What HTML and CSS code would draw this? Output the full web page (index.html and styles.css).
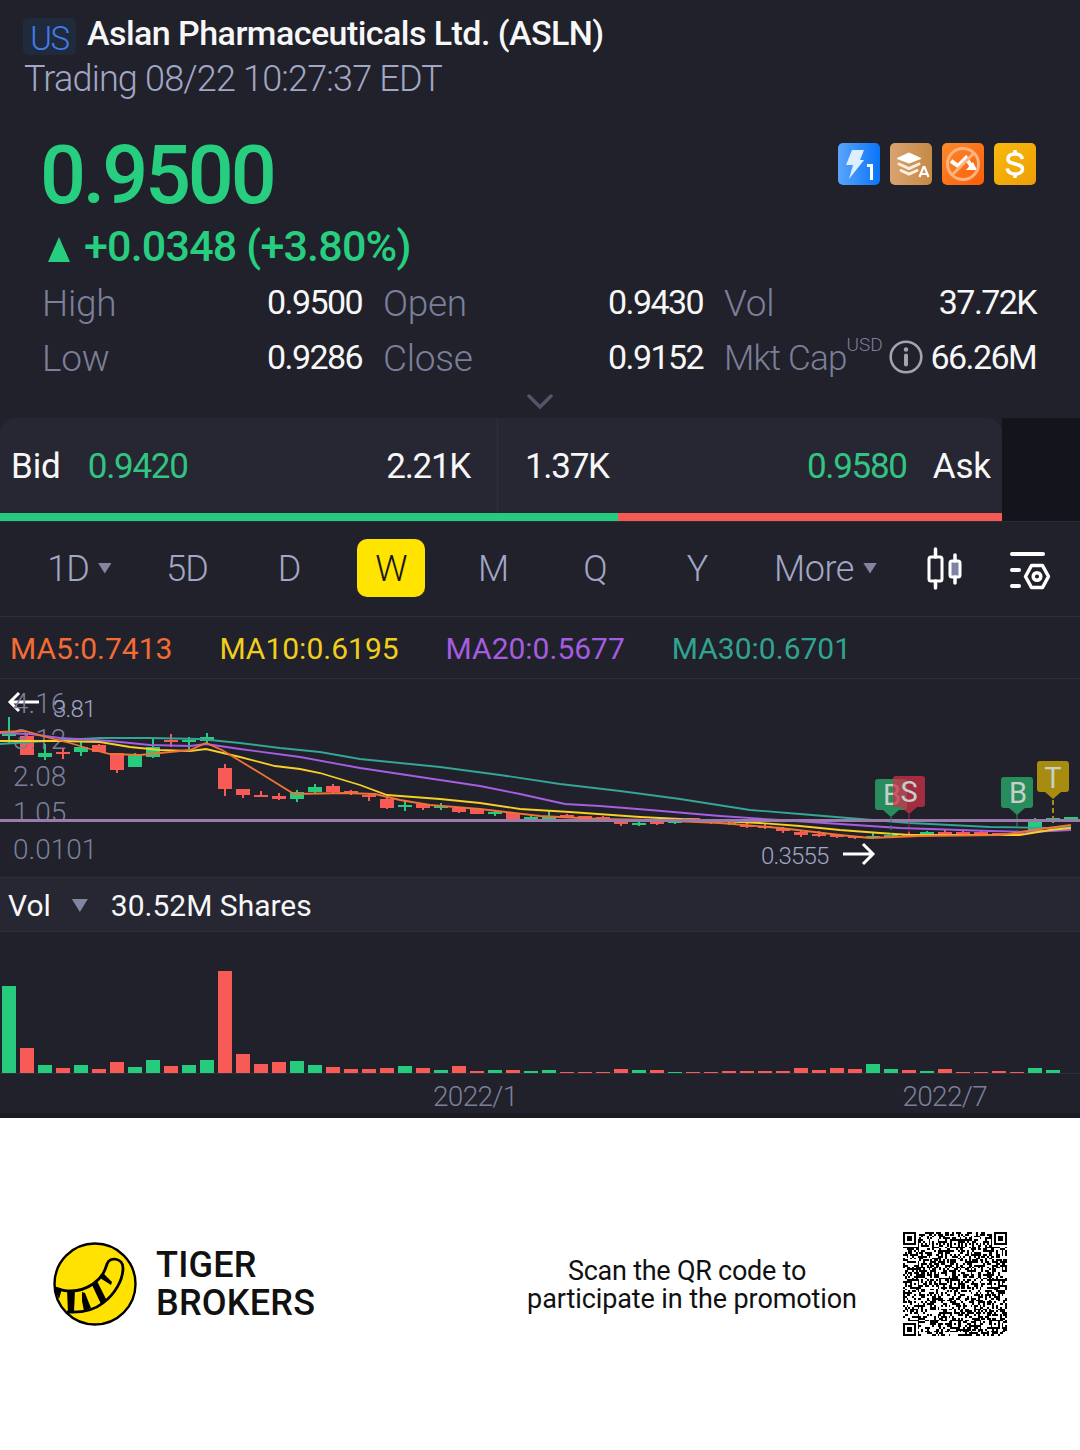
FILE: index.html
```html
<!DOCTYPE html>
<html lang="en">
<head>
  <meta charset="UTF-8">
  <title>Aslan Pharmaceuticals Ltd. (ASLN)</title>
  <link rel="stylesheet" href="styles.css">
</head>
<body>

  <header class="quote">
    <div class="title-row">
      <span class="market">US</span>
      <h1>Aslan Pharmaceuticals Ltd. (ASLN)</h1>
    </div>
    <div class="status">Trading 08/22 10:27:37 EDT</div>

    <div class="price-row">
      <div class="price">0.9500</div>
      <div class="tags">
        <svg width="42" height="42" viewBox="0 0 42 42">
          <defs>
            <linearGradient id="blue" x2="1"><stop offset="0" stop-color="#5aa5fb"/><stop offset="1" stop-color="#0a74f8"/></linearGradient>
            <linearGradient id="tan" x2="1"><stop offset="0" stop-color="#d9a372"/><stop offset="1" stop-color="#c58a45"/></linearGradient>
            <linearGradient id="orange" x2="1" y2="1"><stop offset="0" stop-color="#fb8a2c"/><stop offset="1" stop-color="#fc5e08"/></linearGradient>
            <linearGradient id="gold" x2="1" y2="1"><stop offset="0" stop-color="#f9b90f"/><stop offset="1" stop-color="#ee9d05"/></linearGradient>
          </defs>
          <rect width="42" height="42" rx="5" fill="url(#blue)"/>
          <path d="M14 7h12l-4 10h4L11 36l4-14H8z" fill="#dceeff"/>
          <path d="M29 22.500h4.500V37" fill="none" stroke="#fff" stroke-width="3"/>
        </svg>
        <svg width="42" height="42" viewBox="0 0 42 42">
          <rect width="42" height="42" rx="5" fill="url(#tan)"/>
          <path d="M7 15.500L19 10l12 5.500L19 20z" fill="#fff" stroke="#fff" stroke-linejoin="round"/>
          <path d="M9 21l10 4.500L29 21M11 27.500l8 3.500 8-3.500" fill="none" stroke="#fdeedd" stroke-width="3" stroke-linecap="round"/>
          <path d="M29.500 34l4-10h1l4 10M31 31h6" fill="none" stroke="#fff" stroke-width="2.200"/>
        </svg>
        <svg width="42" height="42" viewBox="0 0 42 42">
          <rect width="42" height="42" rx="5" fill="url(#orange)"/>
          <path d="M9 18l7 5 8-8 6 9" fill="none" stroke="#fff" stroke-width="4"/>
          <path d="M24 27l7-8 4 8z" fill="#fff"/>
          <circle cx="21" cy="21" r="15.500" fill="none" stroke="#fdb483" stroke-width="3"/>
          <path d="M32 10L10 32" stroke="#fdb483" stroke-width="3"/>
        </svg>
        <svg width="42" height="42" viewBox="0 0 42 42">
          <rect width="42" height="42" rx="5" fill="url(#gold)"/>
          <path d="M28.500 16c-1-3.500-3.500-5-7.500-5-4.500 0-7 2-7 5 0 6.500 14.500 3.500 14.500 10 0 3-3 5-7.500 5s-7-2-8-5.500M21 7v4M21 31v4" fill="none" stroke="#fff" stroke-width="3.500"/>
        </svg>
      </div>
    </div>

    <div class="change">
      <svg width="22" height="25" viewBox="0 0 22 25"><path d="M11 0l11 25H0z" fill="#27ce7f"/></svg>
      <span>+0.0348 (+3.80%)</span>
    </div>

    <div class="stats">
      <div class="stat"><span class="label">High</span><span class="value">0.9500</span></div>
      <div class="stat"><span class="label">Open</span><span class="value">0.9430</span></div>
      <div class="stat"><span class="label">Vol</span><span class="value">37.72K</span></div>
      <div class="stat"><span class="label">Low</span><span class="value">0.9286</span></div>
      <div class="stat"><span class="label">Close</span><span class="value">0.9152</span></div>
      <div class="stat">
        <span class="label cap">Mkt Cap</span><span class="unit">USD</span>
        <svg class="info" width="34" height="34" viewBox="0 0 34 34">
          <circle cx="17" cy="17" r="15.300" fill="none" stroke="#a3a4b3" stroke-width="2.600"/>
          <circle cx="17" cy="9.500" r="2.200" fill="#a3a4b3"/>
          <path d="M17 15.500v9" stroke="#a3a4b3" stroke-width="4" stroke-linecap="round"/>
        </svg>
        <span class="value">66.26M</span>
      </div>
    </div>

    <svg class="chevron" width="28" height="16" viewBox="0 0 28 16"><path d="M3 2l11 11L25 2" fill="none" stroke="#52546a" stroke-width="3.500" stroke-linecap="round"/></svg>
  </header>

  <section class="book">
    <div class="book-panel">
      <div class="side bid">
        <span>Bid</span><span class="up">0.9420</span><span class="size">2.21K</span>
      </div>
      <div class="side ask">
        <span class="size">1.37K</span><span class="up">0.9580</span><span>Ask</span>
      </div>
      <div class="ratio"><i class="ratio-bid" style="width: 61.7%"></i></div>
    </div>
  </section>

  <nav class="periods">
    <span class="tab first">1D <i class="caret"></i></span>
    <span class="tab">5D</span>
    <span class="tab">D</span>
    <span class="tab"><b class="active">W</b></span>
    <span class="tab">M</span>
    <span class="tab">Q</span>
    <span class="tab">Y</span>
    <span class="tab more">More <i class="caret"></i></span>
    <svg class="kline" width="36" height="44" viewBox="0 0 36 44" fill="none" stroke="#fff">
      <rect x="2" y="10" width="13" height="24" rx="2" stroke-width="3"/>
      <path d="M8.500 2v8M8.500 34v7" stroke-width="3.500" stroke-linecap="round"/>
      <rect x="23" y="14" width="10" height="16" rx="2" fill="#7f83a6" stroke-width="3"/>
      <path d="M28 8v6M28 30v6" stroke-width="3.500" stroke-linecap="round"/>
    </svg>
    <svg class="settings" width="44" height="40" viewBox="0 0 44 40" fill="none" stroke="#fff" stroke-width="4" stroke-linecap="round">
      <path d="M4 4h31M4 20h7M4 36h7"/>
      <path d="M23.500 15.500h11l6 11-6 11h-11l-6-11z" stroke-width="3.500" stroke-linejoin="round"/>
      <circle cx="29" cy="26.500" r="3.800" stroke-width="3.500"/>
    </svg>
  </nav>

  <div class="averages">
    <span class="ma5">MA5:0.7413</span>
    <span class="ma10">MA10:0.6195</span>
    <span class="ma20">MA20:0.5677</span>
    <span class="ma30">MA30:0.6701</span>
  </div>

  <svg class="price-chart" id="priceChart" width="1080" height="198" viewBox="0 679 1080 198">
    <path d="M39 702H10M19 693l-9 9 9 9" class="arrow"/>
    <g id="candles"></g>
    <g class="axis">
      <text x="13" y="713">4.16</text>
      <text x="13" y="749">3.12</text>
      <text x="13" y="786">2.08</text>
      <text x="13" y="822">1.05</text>
      <text x="13" y="859">0.0101</text>
    </g>
    <g class="extreme">
      <text x="53" y="717">3.81</text>
      <text x="761" y="864">0.3555</text>
    </g>
    <path d="M843 854h29M863 844l10 10-10 10" class="arrow"/>
    <polyline class="line ma30" points="0,744 30,742 63,740 100,738 150,738 200,739 240,743 280,748 320,752 360,759 400,763 440,767 500,775 560,784 620,791 680,799 750,810 800,814 860,819 910,823 990,827 1050,828 1071,827"/>
    <polyline class="line ma20" points="0,733 30,734 60,738 110,741 150,745 190,746 206,744 240,749 300,757 360,768 420,777 480,786 520,794 565,804 600,806 650,810 720,816 780,820 840,824 900,828 990,831 1030,832 1071,830"/>
    <polyline class="line ma10" points="0,741 60,741 100,742 130,747 160,750 190,751 206,749 240,757 275,766 300,769 320,773 360,785 387,795 440,799 480,803 520,809 570,812 640,817 700,820 760,823 800,826 840,830 880,833 910,835 1020,835 1050,830 1071,828"/>
    <polyline class="line ma5" points="0,732 25,731 50,738 70,743 90,749 110,754 140,755 170,752 190,750 206,743 222,750 260,773 294,794 345,793 375,794 400,800 430,805 480,809 540,816 600,819 650,820 720,823 780,828 840,835 870,838 920,836 1000,835 1040,829 1071,825"/>
    <path d="M0 820.500H1080" stroke="#9b7bab" stroke-width="3"/>
    <g class="marks">
      <path d="M891 817v19M1017 814v18" stroke="#2a8a5e" stroke-dasharray="5 3"/>
      <path d="M909 814v19" stroke="#a62a40" stroke-dasharray="5 3"/>
      <path d="M1053 800v19" stroke="#a98a10" stroke-width="2" stroke-dasharray="5 3"/>
      <path d="M878 779h26q3 0 3 3v25q0 3-3 3h-5l-8 7-8-7h-5q-3 0-3-3v-25q0-3 3-3z" fill="#288c5d"/>
      <text x="892" y="805">B</text>
      <path d="M896 776h26q3 0 3 3v25q0 3-3 3h-5l-8 7-8-7h-5q-3 0-3-3v-25q0-3 3-3z" fill="#cf304a" fill-opacity=".75"/>
      <text x="909" y="802">S</text>
      <path d="M1004 777h26q3 0 3 3v25q0 3-3 3h-5l-8 7-8-7h-5q-3 0-3-3v-25q0-3 3-3z" fill="#288c5d"/>
      <text x="1018" y="803">B</text>
      <path d="M1040 761h26q3 0 3 3v25q0 3-3 3h-5l-8 7-8-7h-5q-3 0-3-3v-25q0-3 3-3z" fill="#a88c0f"/>
      <text x="1053" y="788">T</text>
    </g>
  </svg>

  <div class="vol-head">
    <span>Vol</span>
    <i class="caret big"></i>
    <span>30.52M Shares</span>
  </div>

  <svg class="vol-chart" id="volChart" width="1080" height="141" viewBox="0 932 1080 141"></svg>

  <div class="dates">
    <span>2022/1</span>
    <span>2022/7</span>
  </div>

  <footer class="promo">
    <svg class="logo" width="84" height="84" viewBox="0 0 84 84">
      <clipPath id="disc"><circle cx="42" cy="42" r="40.500"/></clipPath>
      <circle cx="42" cy="42" r="40.500" fill="#ffe200"/>
      <g clip-path="url(#disc)">
        <path d="M0 45C14 51 28 50 40 42 50 35 52 28 54 22 57 14 70 16 70 26 70 38 62 52 50 61 40 69 28 71 14 70" fill="none" stroke="#000" stroke-width="2.800"/>
        <path d="M0 44l9 3-3 10zM14 48h8l-1 22-6 1zM29 50l3 1 6 15-7 3-2-10zM39 43l5-4 9 18-5 5zM47 36l4-4 8 8-1 3z"/>
      </g>
      <circle cx="42" cy="42" r="40.500" fill="none" stroke="#000" stroke-width="2.400"/>
    </svg>
    <div class="brand">TIGER<br>BROKERS</div>
    <p class="scan"><span class="scan-top">Scan the QR code to</span><br>participate in the promotion</p>
    <svg class="qr" width="104" height="104" viewBox="0 0 57 57"><path id="qr"/></svg>
  </footer>

  <script>
    // weekly candles: colour, high, low, body top, body bottom, volume height
    const weeks = [
      ['g', 717, 744, 731, 736, 87], ['r', 733, 755, 736, 755, 25], ['g', 744, 760, 753, 757, 8],
      ['r', 748, 759, 752, 754, 5], ['g', 741, 756, 747, 752, 8], ['r', 744, 752, 745, 752, 4],
      ['r', 753, 773, 753, 770, 11], ['g', 753, 767, 755, 767, 6], ['g', 738, 758, 747, 757, 13],
      ['r', 734, 747, 740, 742, 7], ['g', 737, 749, 740, 742, 8], ['g', 733, 743, 737, 741, 13],
      ['r', 764, 796, 768, 789, 102], ['r', 789, 798, 789, 795, 19], ['r', 791, 796, 795, 797, 9],
      ['r', 793, 800, 796, 799, 11], ['g', 790, 802, 792, 799, 12], ['g', 784, 793, 787, 792, 8],
      ['r', 784, 794, 786, 792, 6], ['r', 790, 795, 791, 794, 4], ['r', 794, 801, 795, 797, 4],
      ['r', 797, 809, 799, 808, 5], ['g', 801, 811, 805, 807, 7], ['r', 803, 810, 804, 808, 5],
      ['g', 803, 810, 806, 808, 3], ['r', 807, 813, 808, 812, 7], ['r', 809, 814, 809, 814, 2],
      ['g', 811, 816, 812, 814, 3], ['r', 812, 820, 813, 820, 3], ['g', 816, 822, 817, 819, 2],
      ['g', 811, 819, 816, 819, 3], ['r', 814, 818, 815, 817, 1], ['r', 816, 819, 816, 819, 1],
      ['r', 816, 819, 817, 819, 1], ['r', 821, 826, 822, 824, 4], ['g', 822, 826, 823, 825, 3],
      ['r', 821, 825, 822, 824, 3], ['g', 821, 824, 821, 823, 1], ['r', 818, 820, 818, 820, 1],
      ['r', 821, 824, 821, 823, 1], ['r', 822, 825, 823, 824, 2], ['r', 823, 828, 825, 827, 2],
      ['r', 824, 829, 826, 828, 2], ['r', 827, 833, 828, 831, 2], ['r', 830, 837, 832, 835, 5],
      ['r', 831, 837, 834, 836, 3], ['r', 834, 838, 835, 837, 5], ['r', 836, 839, 836, 838, 4],
      ['g', 832, 839, 836, 838, 9], ['g', 833, 837, 835, 837, 4], ['r', 832, 836, 834, 836, 3],
      ['g', 831, 834, 832, 834, 2], ['r', 829, 834, 832, 834, 4], ['r', 831, 834, 832, 834, 1],
      ['r', 831, 834, 832, 834, 1], ['r', 833, 836, 833, 835, 2], ['r', 832, 835, 833, 835, 1],
      ['g', 818, 831, 822, 831, 5], ['g', 816, 823, 818, 820, 3], ['g', 817, 819, 817, 819, 0]
    ];
    const colors = { g: '#26cb7e', r: '#f85a56' };

    let candles = '';
    let volumes = '';
    weeks.forEach(([c, high, low, top, bottom, vol], i) => {
      const x = 2 + i * 18;
      candles += `<rect x="${x + 6}" y="${high}" width="2" height="${low - high}" fill="${colors[c]}"/>`;
      candles += `<rect x="${x}" y="${top}" width="14" height="${bottom - top}" fill="${colors[c]}"/>`;
      volumes += `<rect x="${x}" y="${1073 - vol}" width="14" height="${vol}" fill="${colors[c]}"/>`;
    });
    document.getElementById('candles').innerHTML = candles;
    document.getElementById('volChart').innerHTML = volumes;

    // QR modules
    const n = 57;
    let seed = 20220822;
    const random = () => (seed = (seed * 48271) % 2147483647) / 2147483647;
    const finders = [[0, 0], [n - 7, 0], [0, n - 7]];
    const aligns = [6, 28, 50];
    let d = '';
    for (let y = 0; y < n; y++) {
      for (let x = 0; x < n; x++) {
        let on = random() < 0.5;
        if (x === 6) on = y % 2 === 0;
        if (y === 6) on = x % 2 === 0;
        aligns.forEach(ax => aligns.forEach(ay => {
          const r = Math.max(Math.abs(x - ax), Math.abs(y - ay));
          if (r <= 2) on = r !== 1;
        }));
        finders.forEach(([fx, fy]) => {
          const r = Math.max(Math.abs(x - fx - 3), Math.abs(y - fy - 3));
          if (r <= 4) on = r !== 2 && r !== 4;
        });
        if (on) d += `M${x} ${y}h1v1h-1z`;
      }
    }
    const qr = document.getElementById('qr');
    qr.setAttribute('d', d);
    qr.setAttribute('shape-rendering', 'crispEdges');
  </script>

</body>
</html>
```
FILE: styles.css
```css
* {
  box-sizing: border-box;
}

body {
  margin: 0;
  width: 1080px;
  height: 1450px;
  overflow: hidden;
  background: #fff;
  color: #f7f7f8;
  font-family: Roboto, "Liberation Sans", sans-serif;
}

svg {
  display: block;
  flex: none;
}

.quote {
  height: 418px;
  background: #20212a;
}

.title-row {
  display: flex;
  padding: 18px 0 0 23px;
  height: 56px;
}

.market {
  width: 53px;
  height: 37px;
  margin-right: 11px;
  border-radius: 5px;
  background: #202a3d;
  color: #437bea;
  font-size: 33px;
  font-weight: 300;
  line-height: 41px;
  letter-spacing: -1.5px;
  text-align: center;
}

h1 {
  margin: 0;
  font-size: 34px;
  font-weight: 500;
  line-height: 31px;
  letter-spacing: -0.55px;
  white-space: nowrap;
}

.status {
  padding-left: 24px;
  height: 46px;
  color: #a2a7c5;
  font-size: 36px;
  font-weight: 300;
  line-height: 46px;
  letter-spacing: -0.82px;
}

.price-row {
  display: flex;
  justify-content: space-between;
  height: 120px;
  padding: 41px 44px 0 40px;
}

.price {
  color: #27ce7f;
  font-size: 81px;
  font-weight: 500;
  line-height: 65px;
  letter-spacing: -3.2px;
}

.tags {
  display: flex;
  gap: 10px;
}

.change {
  display: flex;
  align-items: center;
  gap: 14px;
  height: 52px;
  padding-left: 48px;
  color: #27ce7f;
  font-size: 43px;
  font-weight: 500;
  letter-spacing: -0.8px;
}

.change svg {
  margin-top: 3px;
}

.change span {
  padding-bottom: 4px;
  line-height: 48px;
}

.stats {
  display: grid;
  grid-template-columns: 320px 320px 312px;
  grid-auto-rows: 55px;
  column-gap: 21px;
  margin-left: 42px;
  margin-top: 2px;
}

.stat {
  display: flex;
  align-items: center;
  line-height: 55px;
}

.label {
  color: #7b7f99;
  font-size: 37px;
  font-weight: 300;
  letter-spacing: -0.3px;
}

.label.cap {
  font-size: 35px;
  letter-spacing: -0.8px;
}

.unit {
  align-self: flex-start;
  color: #7b7f99;
  font-size: 19px;
  font-weight: 300;
  line-height: 28px;
}

.info {
  margin: 0 0 4px 6px;
}

.value {
  margin-left: auto;
  padding-bottom: 2px;
  font-size: 34px;
  letter-spacing: -1.6px;
}

.chevron {
  margin: 8px auto 0;
}

.book {
  height: 103px;
  background: linear-gradient(to right, #20212a 1002px, #14151c 1002px);
}

.book-panel {
  display: grid;
  grid-template-columns: 498px 504px;
  grid-template-rows: 95px 8px;
  width: 1002px;
  border-radius: 16px 16px 0 0;
  background: #262732;
}

.side {
  display: flex;
  align-items: center;
  padding-top: 2px;
  font-size: 35px;
  letter-spacing: -1.3px;
}

.side span:not(.up):not(.size) {
  letter-spacing: -0.1px;
}

.bid {
  padding-left: 11px;
  padding-right: 27px;
  border-right: 1px solid #2d2f3a;
}

.ask {
  padding-left: 27px;
  padding-right: 11px;
}

.up {
  color: #31c581;
}

.bid .up {
  margin-left: 27px;
}

.bid .size {
  margin-left: auto;
}

.ask .up {
  margin-left: auto;
  margin-right: 26px;
}

.ratio {
  grid-column: 1 / 3;
  background: #f65954;
}

.ratio-bid {
  display: block;
  height: 8px;
  background: #25cb7e;
}

.periods {
  display: flex;
  align-items: center;
  height: 96px;
  background: #20212a;
  border-top: 1px solid #292b36;
  border-bottom: 1px solid #2d2f3a;
  color: #a2a7c5;
  font-size: 36px;
  font-weight: 300;
}

.tab {
  flex: none;
  display: flex;
  align-items: center;
  justify-content: center;
  width: 102px;
  letter-spacing: -1px;
}

.tab.first {
  width: 136px;
  padding-left: 23px;
}

.tab.more {
  width: 155px;
  letter-spacing: -0.4px;
}

.active {
  width: 68px;
  height: 58px;
  margin-bottom: 2px;
  border-radius: 10px;
  background: #ffe400;
  color: #17171b;
  font-weight: 300;
  line-height: 60px;
  text-align: center;
}

.caret {
  flex: none;
  width: 14px;
  height: 11px;
  margin: 0 0 2px 9px;
  background: #82859f;
  clip-path: polygon(0 0, 100% 0, 50% 100%);
}

.caret.big {
  width: 16px;
  height: 13px;
  margin: 0 23px 0 21px;
}

.kline {
  margin-left: 24px;
}

.settings {
  margin: 1px 0 0 45px;
}

.averages {
  display: flex;
  gap: 47px;
  height: 62px;
  padding-left: 10px;
  background: #20212a;
  border-bottom: 1px solid #2d2f3a;
  font-size: 30px;
  line-height: 63px;
}

.ma5 {
  color: #f36c35;
  stroke: #f07235;
}

.ma10 {
  color: #f1ce1c;
  stroke: #f7cf28;
}

.ma20 {
  color: #a45de0;
  stroke: #a65fe3;
}

.ma30 {
  color: #31a391;
  stroke: #35a595;
}

.price-chart,
.vol-chart {
  background: #20212a;
}

.line {
  fill: none;
  stroke-width: 1.8;
}

.arrow {
  fill: none;
  stroke: #fff;
  stroke-width: 3;
}

.axis {
  fill: #7b7f99;
  font-size: 28px;
  font-weight: 300;
}

.extreme {
  fill: #a2a7c5;
  font-size: 24px;
  font-weight: 300;
  letter-spacing: -0.8px;
}

.marks text {
  fill: #c4d0c8;
  font-size: 29px;
  text-anchor: middle;
}

.vol-head {
  display: flex;
  align-items: center;
  height: 55px;
  padding: 2px 0 0 8px;
  background: #262732;
  border-top: 1px solid #2d2f3c;
  border-bottom: 1px solid #2d2f3c;
  font-size: 30px;
}

.dates {
  display: flex;
  justify-content: space-between;
  height: 45px;
  padding: 0 93px 0 433px;
  background: #20212a;
  border-top: 1px solid #2d2f3a;
  border-bottom: 5px solid #191a22;
  color: #7b7f99;
  font-size: 28px;
  font-weight: 300;
  line-height: 46px;
  letter-spacing: -0.7px;
}

.promo {
  display: flex;
  align-items: center;
  height: 332px;
  padding-left: 53px;
  color: #111;
}

.brand {
  width: 371px;
  margin-left: 19px;
  font-size: 36px;
  font-weight: 500;
  line-height: 38px;
  letter-spacing: 0.2px;
}

.scan {
  width: 330px;
  margin: 2px 0 0;
  font-size: 27px;
  line-height: 28px;
  letter-spacing: -0.1px;
  text-align: center;
  white-space: nowrap;
}

.scan-top {
  padding-right: 10px;
  letter-spacing: -0.25px;
}

.qr {
  margin-left: 46px;
}
```
